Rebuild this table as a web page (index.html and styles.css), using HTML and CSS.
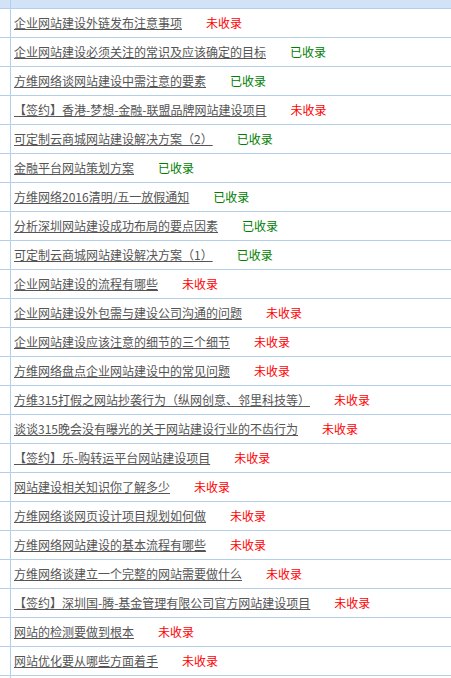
FILE: index.html
```html
<!DOCTYPE html>
<html lang="zh-CN">
<head>
<meta charset="utf-8">
<title>收录列表</title>
<link rel="stylesheet" href="styles.css">
</head>
<body>
<div class="list">
  <div class="row head"><div class="gutter"></div><div class="cell"></div></div>
  <div class="row"><div class="gutter"></div><div class="cell"><a href="#">企业网站建设外链发布注意事项</a><span class="no">未收录</span></div></div>
  <div class="row"><div class="gutter"></div><div class="cell"><a href="#">企业网站建设必须关注的常识及应该确定的目标</a><span class="yes">已收录</span></div></div>
  <div class="row"><div class="gutter"></div><div class="cell"><a href="#">方维网络谈网站建设中需注意的要素</a><span class="yes">已收录</span></div></div>
  <div class="row"><div class="gutter"></div><div class="cell"><a href="#">【签约】香港-梦想-金融-联盟品牌网站建设项目</a><span class="no">未收录</span></div></div>
  <div class="row"><div class="gutter"></div><div class="cell"><a href="#">可定制云商城网站建设解决方案（2）</a><span class="yes">已收录</span></div></div>
  <div class="row"><div class="gutter"></div><div class="cell"><a href="#">金融平台网站策划方案</a><span class="yes">已收录</span></div></div>
  <div class="row"><div class="gutter"></div><div class="cell"><a href="#">方维网络2016清明/五一放假通知</a><span class="yes">已收录</span></div></div>
  <div class="row"><div class="gutter"></div><div class="cell"><a href="#">分析深圳网站建设成功布局的要点因素</a><span class="yes">已收录</span></div></div>
  <div class="row"><div class="gutter"></div><div class="cell"><a href="#">可定制云商城网站建设解决方案（1）</a><span class="yes">已收录</span></div></div>
  <div class="row"><div class="gutter"></div><div class="cell"><a href="#">企业网站建设的流程有哪些</a><span class="no">未收录</span></div></div>
  <div class="row"><div class="gutter"></div><div class="cell"><a href="#">企业网站建设外包需与建设公司沟通的问题</a><span class="no">未收录</span></div></div>
  <div class="row"><div class="gutter"></div><div class="cell"><a href="#">企业网站建设应该注意的细节的三个细节</a><span class="no">未收录</span></div></div>
  <div class="row"><div class="gutter"></div><div class="cell"><a href="#">方维网络盘点企业网站建设中的常见问题</a><span class="no">未收录</span></div></div>
  <div class="row"><div class="gutter"></div><div class="cell"><a href="#">方维315打假之网站抄袭行为（纵网创意、邻里科技等）</a><span class="no">未收录</span></div></div>
  <div class="row"><div class="gutter"></div><div class="cell"><a href="#">谈谈315晚会没有曝光的关于网站建设行业的不齿行为</a><span class="no">未收录</span></div></div>
  <div class="row"><div class="gutter"></div><div class="cell"><a href="#">【签约】乐-购转运平台网站建设项目</a><span class="no">未收录</span></div></div>
  <div class="row"><div class="gutter"></div><div class="cell"><a href="#">网站建设相关知识你了解多少</a><span class="no">未收录</span></div></div>
  <div class="row"><div class="gutter"></div><div class="cell"><a href="#">方维网络谈网页设计项目规划如何做</a><span class="no">未收录</span></div></div>
  <div class="row"><div class="gutter"></div><div class="cell"><a href="#">方维网络网站建设的基本流程有哪些</a><span class="no">未收录</span></div></div>
  <div class="row"><div class="gutter"></div><div class="cell"><a href="#">方维网络谈建立一个完整的网站需要做什么</a><span class="no">未收录</span></div></div>
  <div class="row"><div class="gutter"></div><div class="cell"><a href="#">【签约】深圳国-腾-基金管理有限公司官方网站建设项目</a><span class="no">未收录</span></div></div>
  <div class="row"><div class="gutter"></div><div class="cell"><a href="#">网站的检测要做到根本</a><span class="no">未收录</span></div></div>
  <div class="row"><div class="gutter"></div><div class="cell"><a href="#">网站优化要从哪些方面着手</a><span class="no">未收录</span></div></div>
  <div class="row tail"><div class="gutter"></div><div class="cell"></div></div>
</div>
</body>
</html>
```

FILE: styles.css
```css
html, body {
  margin: 0;
  padding: 0;
  background: #ffffff;
}

body {
  font-family: "Noto Sans CJK SC", "Noto Sans", sans-serif;
  font-size: 12px;
  color: #555555;
  overflow: hidden;
}

.list {
  display: flex;
  flex-direction: column;
}

.row {
  display: flex;
  height: 28px;
  border-bottom: 1px solid #b3cfea;
}

.row.head {
  height: 8px;
  background: #d2e3f8;
}

.row.tail {
  height: 20px;
  border-bottom: none;
}

.gutter {
  width: 10px;
  flex: none;
  border-right: 1px solid #b3cfea;
}

.cell {
  flex: 1;
  display: flex;
  align-items: center;
  padding-left: 3px;
  white-space: nowrap;
  line-height: 14px;
}

.cell a {
  color: #555555;
  text-decoration: underline;
}

.no,
.yes {
  margin-left: 24px;
}

.no {
  color: #ff0000;
}

.yes {
  color: #008000;
}
```
